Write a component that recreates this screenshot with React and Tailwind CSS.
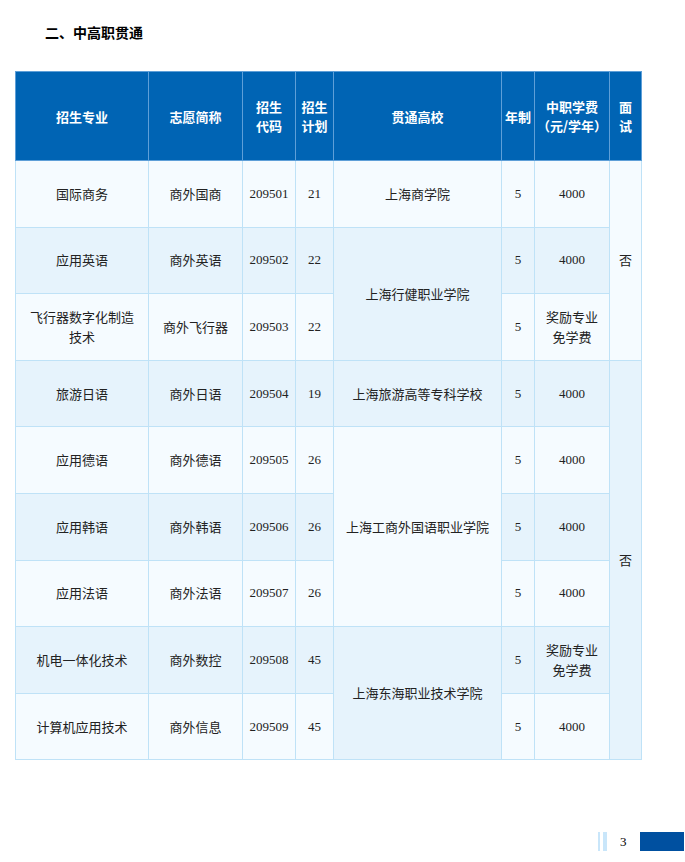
const A='bg-[#f5fbff]',B='bg-[#e6f3fc]';
const td='border border-[#bfe2f7] text-center text-[13px] text-[#222] leading-[20px] p-0';
const num={fontFamily:'"Liberation Serif",serif'};
export default function App(){
  const rows=[
    ['国际商务','商外国商','209501','21'],
    ['应用英语','商外英语','209502','22'],
    ['飞行器数字化制造\n技术','商外飞行器','209503','22'],
    ['旅游日语','商外日语','209504','19'],
    ['应用德语','商外德语','209505','26'],
    ['应用韩语','商外韩语','209506','26'],
    ['应用法语','商外法语','209507','26'],
    ['机电一体化技术','商外数控','209508','45'],
    ['计算机应用技术','商外信息','209509','45'],
  ];
  const fees=['4000','4000','奖励专业\n免学费','4000','4000','4000','4000','奖励专业\n免学费','4000'];
  const school={0:['上海商学院',1],1:['上海行健职业学院',2],3:['上海旅游高等专科学校',1],4:['上海工商外国语职业学院',3],7:['上海东海职业技术学院',2]};
  const mian={0:3,3:6};
  const th='border border-[#5e9fd8] text-white font-bold text-[13px] leading-[19px] text-center p-0';
  return(
    <div className="w-[685px] h-[862px] bg-white relative" style={{fontFamily:'"Noto Sans CJK SC",sans-serif'}}>
      <div className="pt-[22px] pl-[45px] text-[14px] font-bold text-black h-[71px]">二、中高职贯通</div>
      <table className="ml-[15px] border-collapse table-fixed" style={{width:626}}>
        <colgroup>{[133,94,53,38,168,33,75,32].map((w,i)=><col key={i} style={{width:w}}/>)}</colgroup>
        <thead><tr className="h-[89px] bg-[#0064b4]">
          <th className={th}>招生专业</th><th className={th}>志愿简称</th>
          <th className={th}>招生<br/>代码</th><th className={th}>招生<br/>计划</th>
          <th className={th}>贯通高校</th><th className={th}>年制</th>
          <th className={th}>中职学费<br/>（元/学年）</th><th className={th}>面<br/>试</th>
        </tr></thead>
        <tbody>{rows.map((r,i)=>{const bg=i%2?B:A;return(
          <tr key={i} className={`h-[66.6px] ${bg}`}>
            <td className={`${td} whitespace-pre-line`}>{r[0]}</td>
            <td className={td}>{r[1]}</td>
            <td className={td} style={num}>{r[2]}</td>
            <td className={td} style={num}>{r[3]}</td>
            {school[i]&&<td rowSpan={school[i][1]} className={td}>{school[i][0]}</td>}
            <td className={td} style={num}>5</td>
            <td className={`${td} whitespace-pre-line`} style={fees[i]==='4000'?num:{}}>{fees[i]}</td>
            {mian[i]!==undefined&&<td rowSpan={mian[i]} className={td}>否</td>}
          </tr>)})}</tbody>
      </table>
      <div className="absolute left-[598px] top-[832px] flex items-center h-[19px]">
        <div className="w-[2px] h-[19px] bg-[#c9e6fa]"/>
        <div className="w-[4px] h-[19px] bg-[#c9e6fa] ml-[3px]"/>
        <div className="ml-[13px] text-[13px] text-black" style={num}>3</div>
        <div className="ml-[13px] w-[44px] h-[19px] bg-[#0050a0]"/>
      </div>
    </div>);
}
